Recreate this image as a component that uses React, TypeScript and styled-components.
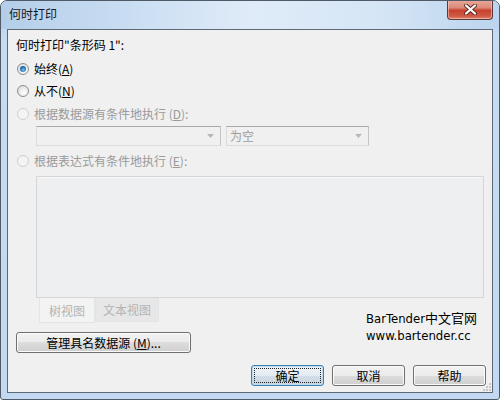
import styled, { createGlobalStyle } from "styled-components";

const GlobalStyle = createGlobalStyle`
  html, body {
    margin: 0;
    padding: 0;
    background: #ffffff;
  }
  body {
    font-family: "Noto Sans CJK SC", "DejaVu Sans", sans-serif;
    font-size: 12px;
    color: #000;
  }
`;

const Radio = ({ checked, disabled }: { checked?: boolean; disabled?: boolean }) => (
  <RadioCircle $disabled={disabled}>{checked && <RadioDot />}</RadioCircle>
);

const ComboArrow = () => (
  <svg width="7" height="4" viewBox="0 0 7 4">
    <path d="M0 0 H7 L3.5 4 Z" fill="#b8b8b8" />
  </svg>
);

const SizeGrip = () => (
  <GripWrap width="10" height="10" viewBox="0 0 10 10">
    {[
      [8, 0],
      [8, 3],
      [5, 3],
      [8, 6],
      [5, 6],
      [2, 6],
    ].map(([x, y]) => (
      <rect key={`${x}-${y}`} x={x} y={y + 2} width="2" height="2" fill="#c6c6c6" />
    ))}
  </GripWrap>
);

const App = () => {
  return (
    <>
      <GlobalStyle />
      <Window>
        <TitleBar>
          <Title>何时打印</Title>
          <CloseButton>
            <svg width="13" height="11" viewBox="0 0 13 11">
              <path
                d="M2 1.5 L11 9.5 M11 1.5 L2 9.5"
                stroke="#5b2a22"
                strokeWidth="4"
                strokeLinecap="round"
              />
              <path
                d="M2 1.5 L11 9.5 M11 1.5 L2 9.5"
                stroke="#ffffff"
                strokeWidth="2.2"
                strokeLinecap="round"
              />
            </svg>
          </CloseButton>
        </TitleBar>
        <Client>
          <Heading>何时打印"条形码 1":</Heading>
          <RadioRow $gap={8}>
            <Radio checked />
            <span>
              始终(<u>A</u>)
            </span>
          </RadioRow>
          <RadioRow $gap={6}>
            <Radio />
            <span>
              从不(<u>N</u>)
            </span>
          </RadioRow>
          <RadioRow $gap={7} $disabled>
            <Radio disabled />
            <span>
              根据数据源有条件地执行 (<u>D</u>):
            </span>
          </RadioRow>
          <ComboRow>
            <Combo $width={185}>
              <span />
              <ComboArrow />
            </Combo>
            <Combo $width={143}>
              <span>为空</span>
              <ComboArrow />
            </Combo>
          </ComboRow>
          <RadioRow $gap={7} $disabled>
            <Radio disabled />
            <span>
              根据表达式有条件地执行 (<u>E</u>):
            </span>
          </RadioRow>
          <ExpressionBox />
          <BottomRow>
            <LeftColumn>
              <Tabs>
                <Tab $active $width={56}>
                  树视图
                </Tab>
                <Tab $width={64}>文本视图</Tab>
              </Tabs>
              <Button $width={175}>
                管理具名数据源 (<u>M</u>)...
              </Button>
            </LeftColumn>
            <Brand>
              <div>BarTender中文官网</div>
              <div>www.bartender.cc</div>
            </Brand>
          </BottomRow>
          <ButtonRow>
            <Button $width={73} $default>
              <FocusRect>确定</FocusRect>
            </Button>
            <Button $width={73}>取消</Button>
            <Button $width={73}>帮助</Button>
          </ButtonRow>
          <SizeGrip />
        </Client>
      </Window>
    </>
  );
};

const Window = styled.div`
  box-sizing: border-box;
  position: relative;
  display: flex;
  flex-direction: column;
  width: 500px;
  height: 400px;
  padding: 0 6px 6px 6px;

  border: 1px solid #4f5a66;
  border-radius: 7px 7px 3px 3px;
  background: linear-gradient(180deg, #bad2ec 0px, #c7dcf2 40px, #c3d9f1 100%);
  overflow: hidden;
`;

const TitleBar = styled.div`
  position: relative;
  display: flex;
  align-items: flex-start;
  height: 28px;
  margin: 0 -6px;
  padding: 0 6px;

  background: linear-gradient(
    90deg,
    #b4cee9 0%,
    #c9ddf2 25%,
    #dfebf8 50%,
    #d6e6f6 75%,
    #bcd4ee 100%
  );
`;

const Title = styled.span`
  margin: 5px 0 0 2px;
  font-size: 12px;
  line-height: 16px;
  color: #1a1a1a;
`;

const CloseButton = styled.div`
  box-sizing: border-box;
  position: absolute;
  top: -1px;
  right: 6px;

  display: flex;
  justify-content: center;
  align-items: center;
  width: 46px;
  height: 20px;

  border: 1px solid #5a3a38;
  border-top: none;
  border-radius: 0 0 4px 4px;
  background: linear-gradient(
    180deg,
    #e9aa9c 0%,
    #dc8a79 40%,
    #c7412d 55%,
    #cf5a45 85%,
    #e08570 100%
  );
  box-shadow: inset 0 0 0 1px rgba(255, 220, 210, 0.5);
`;

const Client = styled.div`
  position: relative;
  flex: 1;
  display: flex;
  flex-direction: column;
  padding: 7px 6px 6px 8px;

  border: 1px solid #5d6977;
  background: #f0f0f0;
`;

const Heading = styled.div`
  height: 16px;
  line-height: 16px;
`;

interface RadioRowProps {
  $gap: number;
  $disabled?: boolean;
}

const RadioRow = styled.div<RadioRowProps>`
  display: flex;
  align-items: center;
  gap: 5px;
  height: 16px;
  margin-top: ${({ $gap }) => $gap}px;
  padding-left: 1px;

  line-height: 16px;
  color: ${({ $disabled }) => ($disabled ? "#9a9a9a" : "#000")};

  u {
    text-underline-offset: 1px;
  }
`;

interface RadioCircleProps {
  $disabled?: boolean;
}

const RadioCircle = styled.span<RadioCircleProps>`
  box-sizing: border-box;
  display: flex;
  justify-content: center;
  align-items: center;
  width: 12px;
  height: 12px;

  border: 1px solid ${({ $disabled }) => ($disabled ? "#cfcfcf" : "#8b8e91")};
  border-radius: 50%;
  background: ${({ $disabled }) =>
    $disabled
      ? "#f4f4f4"
      : "radial-gradient(circle at 60% 65%, #ffffff 0%, #e6e6e6 60%, #d2d2d2 100%)"};
`;

const RadioDot = styled.span`
  width: 6px;
  height: 6px;
  border-radius: 50%;
  background: radial-gradient(circle at 55% 65%, #7cc4f2 0%, #2a7bbf 45%, #16426d 100%);
`;

const ComboRow = styled.div`
  display: flex;
  gap: 5px;
  margin: 4px 0 0 20px;
`;

interface ComboProps {
  $width: number;
}

const Combo = styled.div<ComboProps>`
  box-sizing: border-box;
  display: flex;
  justify-content: space-between;
  align-items: center;
  width: ${({ $width }) => $width}px;
  height: 20px;
  padding: 0 6px 0 3px;

  border: 1px solid #dcdcdc;
  border-top-color: #a9a9a9;
  border-right-color: #c4c4c4;
  background: #f0f0f0;
  color: #9d9d9d;
  line-height: 18px;
`;

const ExpressionBox = styled.div`
  box-sizing: border-box;
  width: 448px;
  height: 122px;
  margin: 7px 0 0 20px;

  border: 1px solid #d6d6d6;
  background: #eeeff0;
  box-shadow: inset 0 1px 0 #f8f8f8;
`;

const BottomRow = styled.div`
  display: flex;
  justify-content: space-between;
`;

const LeftColumn = styled.div`
  display: flex;
  flex-direction: column;
  align-items: flex-start;
  gap: 9px;
`;

const Tabs = styled.div`
  display: flex;
  margin-left: 23px;
`;

interface TabProps {
  $active?: boolean;
  $width: number;
}

const Tab = styled.div<TabProps>`
  box-sizing: border-box;
  display: flex;
  justify-content: center;
  align-items: center;
  width: ${({ $width }) => $width}px;
  height: ${({ $active }) => ($active ? 25 : 24)}px;

  border: 1px solid #e4e4e4;
  border-top: none;
  background: ${({ $active }) => ($active ? "#f3f3f3" : "#e7e7e7")};
  color: #b4b4b4;
`;

interface ButtonProps {
  $width: number;
  $default?: boolean;
}

const Button = styled.div<ButtonProps>`
  box-sizing: border-box;
  display: flex;
  justify-content: center;
  align-items: center;
  width: ${({ $width }) => $width}px;
  height: 21px;
  padding: 2px;

  border: 1px solid ${({ $default }) => ($default ? "#3c7fb1" : "#707070")};
  border-radius: 3px;
  background: ${({ $default }) =>
    $default
      ? "linear-gradient(180deg, #edf3f8 0%, #e4ecf3 50%, #d4dee8 50%, #c9d5e1 100%)"
      : "linear-gradient(180deg, #f2f2f2 0%, #ebebeb 50%, #dddddd 50%, #cfcfcf 100%)"};
  box-shadow: inset 0 0 0 1px ${({ $default }) => ($default ? "#b9dcf4" : "#fbfbfb")};
  line-height: 15px;

  u {
    text-underline-offset: 1px;
  }
`;

const FocusRect = styled.span`
  box-sizing: border-box;
  display: flex;
  justify-content: center;
  align-items: center;
  width: 100%;
  height: 100%;
  border: 1px dotted #202020;
`;

const Brand = styled.div`
  margin: 12px 8px 0 0;
  font-family: "DejaVu Sans Condensed", "DejaVu Sans", "Noto Sans CJK SC", sans-serif;
  font-size: 13px;
  line-height: 17px;
  color: #000;
  width: 112px;
`;

const ButtonRow = styled.div`
  display: flex;
  justify-content: flex-end;
  gap: 8px;
  margin-top: auto;
`;

const GripWrap = styled.svg`
  position: absolute;
  right: 1px;
  bottom: 1px;
`;

export default App;
